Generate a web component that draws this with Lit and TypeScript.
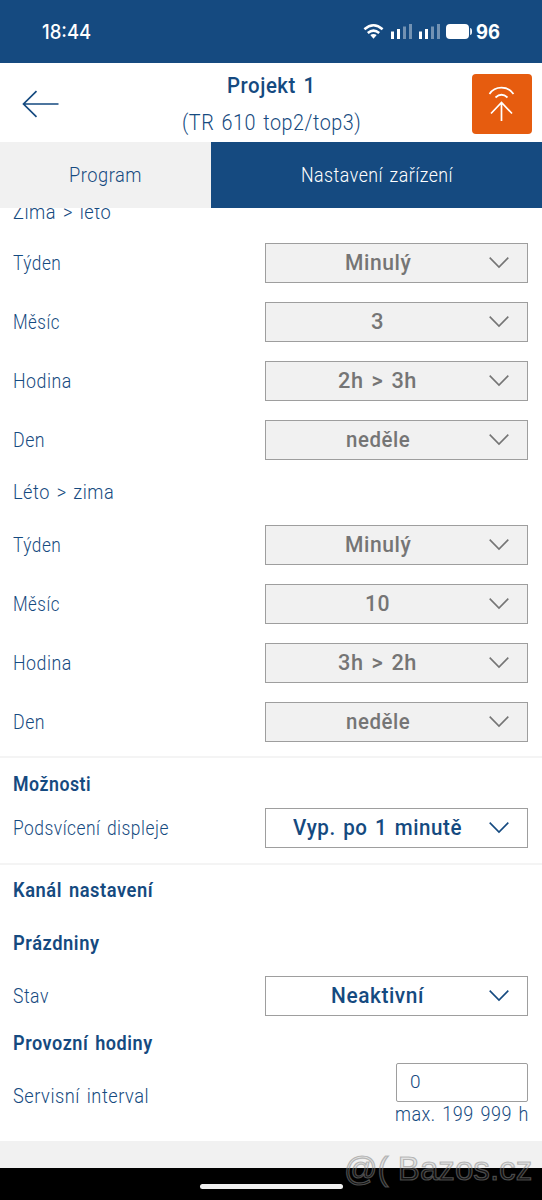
import { LitElement, html, css, svg } from "lit";
import { customElement, property, query } from "lit/decorators.js";

/** One line of text, condensed or widened horizontally to a given measure. */
@customElement("fit-text")
class FitText extends LitElement {
  static styles = css`
    :host { display: inline-block; white-space: nowrap; line-height: inherit; }
    .ink { display: inline-block; transform-origin: 0 50%; white-space: pre; }
  `;
  @property() text = "";
  @property({ type: Number }) measure = 0;
  @query(".ink") ink!: HTMLElement;

  render() {
    return html`<span class="ink">${this.text}</span>`;
  }
  updated() {
    const natural = this.ink.offsetWidth;
    if (!natural || !this.measure) return;
    this.style.width = `${this.measure}px`;
    this.ink.style.transform = `scaleX(${this.measure / natural})`;
  }
}

const fit = (text: string, measure: number) =>
  html`<fit-text .text=${text} .measure=${measure}></fit-text>`;

@customElement("select-box")
class SelectBox extends LitElement {
  static styles = css`
    :host { display: block; width: 263px; flex: none; }
    .box {
      box-sizing: border-box; height: 40px; display: flex; align-items: center;
      border: 1px solid #9e9e9e; background: #fff; color: #154a80;
      font-weight: 500; font-size: 22px; line-height: 36px;
    }
    .box.off { background: #f1f1f1; color: #757575; }
    .value { flex: 1; text-align: center; padding-left: 1px; }
    .arrow { width: 22px; height: 14px; margin-right: 17px; flex: none; fill: none; stroke: currentColor; stroke-width: 1.6; }
  `;
  @property() value = "";
  @property({ type: Number }) measure = 0;
  @property({ type: Boolean }) off = false;

  render() {
    return html`<div class="box ${this.off ? "off" : ""}">
      <div class="value">${fit(this.value, this.measure)}</div>
      <svg class="arrow" viewBox="0 0 22 14"><path d="M1.7 1.6 L11 11 L20.3 1.6" /></svg>
    </div>`;
  }
}

type Row = [label: string, labelWidth: number, value: string, valueWidth: number];

const toSummer: Row[] = [
  ["Týden", 48, "Minulý", 66],
  ["Měsíc", 47, "3", 13],
  ["Hodina", 59, "2h > 3h", 79],
  ["Den", 32, "neděle", 64],
];
const toWinter: Row[] = [
  ["Týden", 48, "Minulý", 66],
  ["Měsíc", 47, "10", 25],
  ["Hodina", 59, "3h > 2h", 79],
  ["Den", 32, "neděle", 64],
];

@customElement("app-root")
class AppRoot extends LitElement {
  static styles = css`
    :host {
      display: flex; flex-direction: column; position: relative; overflow: hidden;
      width: 542px; height: 1200px; background: #fff; color: #154a80;
      font-family: Roboto, "Noto Sans", sans-serif; font-size: 20.5px; font-weight: 340; line-height: 24px;
      word-spacing: 2px; letter-spacing: 0.6px;
    }
    .status {
      height: 63px; flex: none; box-sizing: border-box; background: #154a80; color: #fff;
      display: flex; align-items: center; justify-content: space-between; padding: 0 42px;
      font-family: Inter, sans-serif; font-weight: 500; font-size: 20px; letter-spacing: 0;
    }
    .indicators { display: flex; align-items: center; gap: 4px; font-weight: 700; }
    .signals { width: 110px; height: 20px; fill: #fff; }
    .dim { opacity: 0.4; }
    .wave { fill: none; stroke: #fff; stroke-width: 2.5; }
    .header { height: 79px; flex: none; display: flex; box-sizing: border-box; padding: 10px 10px 0 22px; }
    .back { width: 38px; height: 30px; margin-top: 16px; fill: none; stroke: #154a80; stroke-width: 1.7; }
    .titles { flex: 1; text-align: center; margin-left: 10px; }
    .title { font-size: 22px; font-weight: 500; line-height: 26px; }
    .subtitle { font-size: 22px; line-height: 27px; margin-top: 10px; }
    .upload { width: 60px; height: 60px; margin-top: 1px; border-radius: 4px; background: #e65c0f; flex: none; }
    .upload-icon { display: block; width: 60px; height: 60px; fill: none; stroke: #fff; stroke-width: 1.7; }
    .tabs { display: flex; height: 66px; flex: none; font-size: 21px; line-height: 66px; text-align: center; }
    .tab { width: 211px; background: #f1f1f1; }
    .tab.active { width: 331px; background: #154a80; color: #fff; }
    .content { flex: 1; min-height: 0; overflow: hidden; }
    .clipped { margin-top: -8px; height: 33px; padding-left: 13px; }
    .row { height: 59.1px; display: flex; align-items: center; justify-content: space-between; padding: 0 14px 0 13px; }
    .caption { height: 46px; line-height: 47px; padding-left: 13px; }
    .heading { padding-left: 13px; font-weight: 600; height: 24px; font-size: 20px; }
    .rule { height: 2px; background: #f4f4f4; }
    .rule.first { margin: 4px 0 14px; }
    .options { height: 65px; padding-bottom: 2px; }
    .channel { margin-top: 13px; }
    .holidays { margin-top: 29px; }
    .state { height: 40px; margin-top: 21px; }
    .hours { margin-top: 15px; }
    .service { display: flex; justify-content: space-between; padding: 0 14px 0 13px; margin-top: 8px; }
    .service-label { margin-top: 21px; }
    .entry { width: 133px; }
    .field { box-sizing: border-box; width: 132px; height: 39px; margin-left: 1px; border: 1px solid #9e9e9e; border-radius: 2px; padding-left: 13px; line-height: 36px; font-size: 19px; }
    .footer { height: 27px; flex: none; background: #f1f1f1; }
    .nav { height: 32px; flex: none; background: #000; display: flex; justify-content: center; align-items: center; }
    .pill { width: 143px; height: 5px; border-radius: 3px; background: #f1f1f1; margin-top: 5px; }
    .watermark {
      position: absolute; left: 344px; top: 1149px; font-family: "Liberation Sans", Arial, sans-serif;
      font-size: 34px; line-height: 38px; font-weight: 400; color: rgba(128, 128, 128, 0.12);
      letter-spacing: 0; word-spacing: 0;
      -webkit-text-stroke: 1.2px rgba(135, 135, 135, 0.55);
    }
  `;

  private row([label, labelWidth, value, valueWidth]: Row) {
    return html`<div class="row">
      ${fit(label, labelWidth)}
      <select-box off .value=${value} .measure=${valueWidth}></select-box>
    </div>`;
  }

  private bars(x: number) {
    return svg`
      <rect x=${x} y="9.5" width="3" height="7.5" />
      <rect x=${x + 6} y="7" width="3" height="10" />
      <rect class="dim" x=${x + 12} y="4.5" width="3" height="12.5" />
      <rect class="dim" x=${x + 18} y="2" width="3" height="15" />`;
  }

  render() {
    return html`
      <div class="status">
        ${fit("18:44", 49)}
        <div class="indicators">
          <svg class="signals" viewBox="0 0 110 20">
            <path class="wave" d="M2.4 7.2 Q11.5 -0.6 20.6 7.2 M5.8 11 Q11.5 6.2 17.2 11" />
            <path d="M8.3 13 Q11.5 10.8 14.7 13 L11.5 16.8 Z" />
            ${this.bars(29)}${this.bars(57)}
            <rect x="84" y="2" width="23" height="15" rx="4" />
            <path d="M108.2 6 Q110 6.3 110 9.5 T108.2 13 Z" />
          </svg>
          ${fit("96", 24)}
        </div>
      </div>
      <div class="header">
        <svg class="back" viewBox="0 0 38 30"><path d="M36.5 15 H1.5 M14.5 2.2 L1.5 15 L14.5 27.8" /></svg>
        <div class="titles">
          <div class="title">${fit("Projekt 1", 89)}</div>
          <div class="subtitle">${fit("(TR 610 top2/top3)", 179)}</div>
        </div>
        <div class="upload">
          <svg class="upload-icon" viewBox="0 0 60 60">
            <path d="M17.5 20 C23 11.5 36 11.5 41.5 20 M23.5 23.5 Q29.5 18 35.5 23.5 M29.5 47 V28.5 M19 39.5 L29.5 28.5 L40 39.5" />
          </svg>
        </div>
      </div>
      <div class="tabs">
        <div class="tab">${fit("Program", 73)}</div>
        <div class="tab active">${fit("Nastavení zařízení", 152)}</div>
      </div>
      <div class="content">
        <div class="clipped">${fit("Zima > léto", 98)}</div>
        ${toSummer.map((r) => this.row(r))}
        <div class="caption">${fit("Léto > zima", 101)}</div>
        ${toWinter.map((r) => this.row(r))}
        <div class="rule first"></div>
        <div class="heading">${fit("Možnosti", 78)}</div>
        <div class="row options">
          ${fit("Podsvícení displeje", 156)}
          <select-box .value=${"Vyp. po 1 minutě"} .measure=${169}></select-box>
        </div>
        <div class="rule"></div>
        <div class="heading channel">${fit("Kanál nastavení", 140)}</div>
        <div class="heading holidays">${fit("Prázdniny", 87)}</div>
        <div class="row state">
          ${fit("Stav", 36)}
          <select-box .value=${"Neaktivní"} .measure=${93}></select-box>
        </div>
        <div class="heading hours">${fit("Provozní hodiny", 140)}</div>
        <div class="service">
          <div class="service-label">${fit("Servisní interval", 136)}</div>
          <div class="entry">
            <div class="field">${fit("0", 11)}</div>
            ${fit("max. 199 999 h", 134)}
          </div>
        </div>
      </div>
      <div class="footer"></div>
      <div class="nav"><div class="pill"></div></div>
      <div class="watermark">${fit("@( Bazos.cz", 188)}</div>
    `;
  }
}
